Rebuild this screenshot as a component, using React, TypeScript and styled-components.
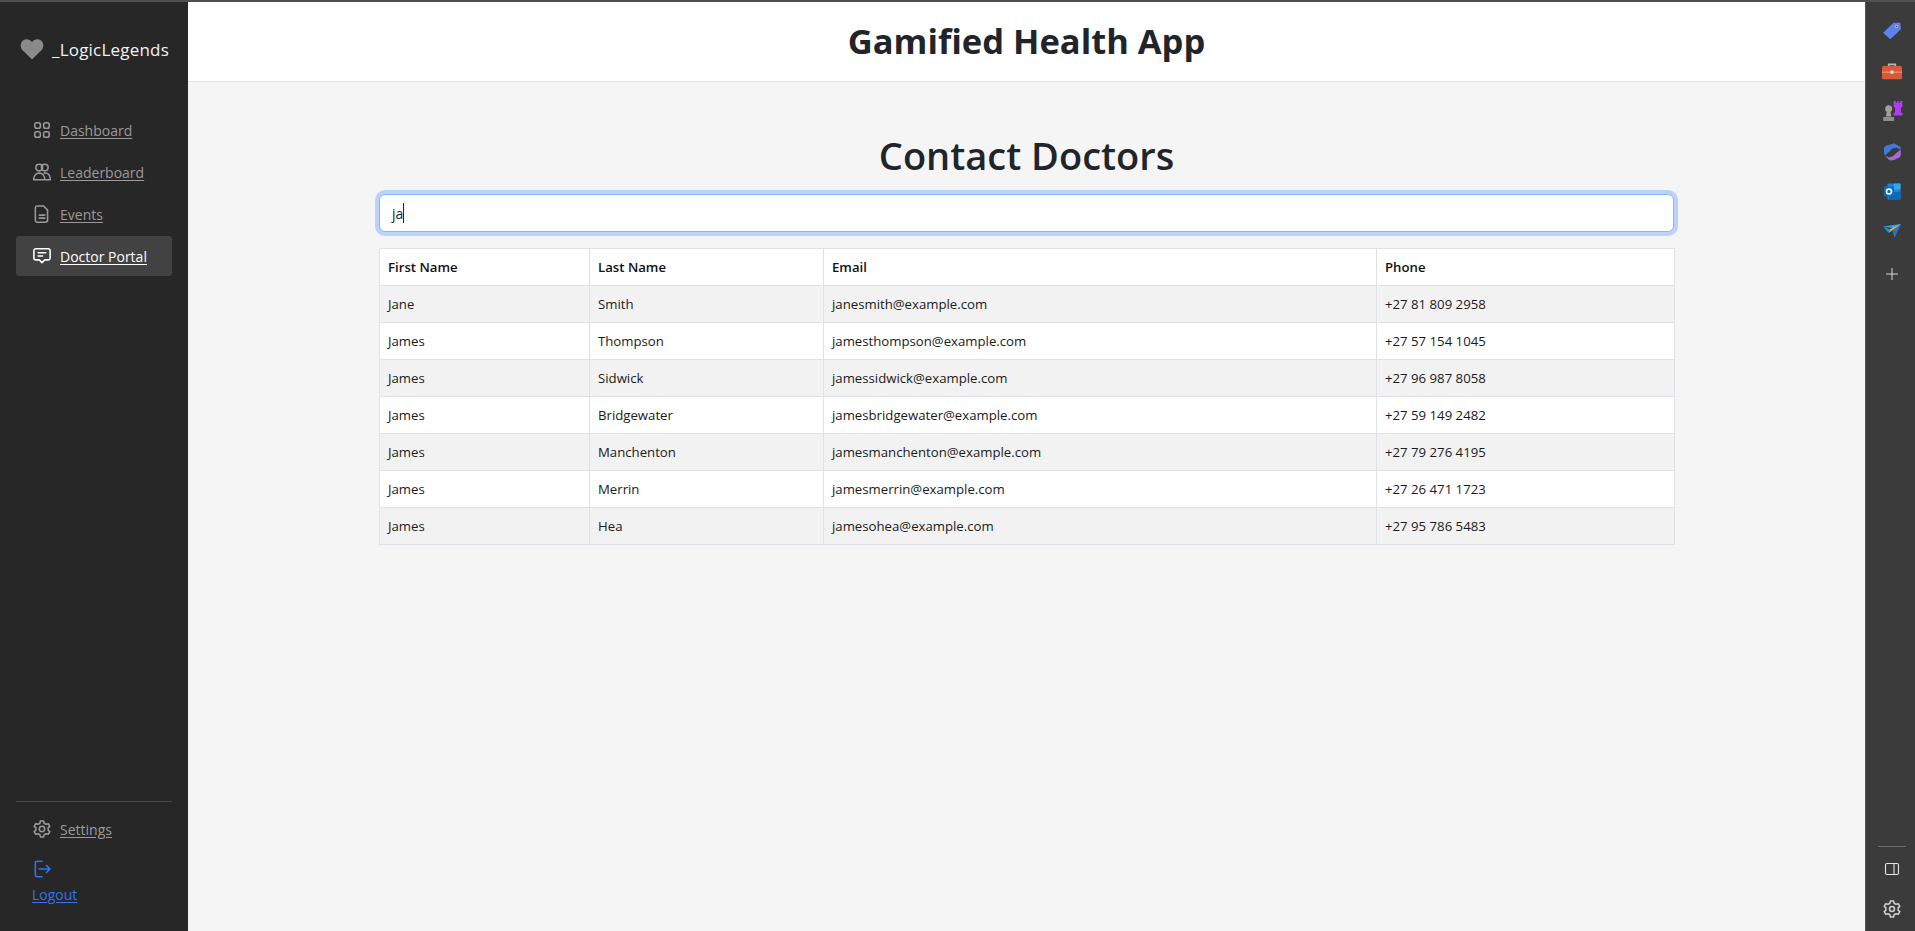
import React from 'react';
import styled, { createGlobalStyle } from 'styled-components';

const Global = createGlobalStyle`
  html, body { margin: 0; padding: 0; height: 100%; background: #f5f5f5; }
  body { font-family: "Open Sans", "Noto Sans", "Liberation Sans", sans-serif; overflow: hidden; }
  * { box-sizing: border-box; }
`;

const Page = styled.div`
  width: 1915px;
  height: 931px;
  display: flex;
  flex-direction: column;
`;

const TopEdge = styled.div`
  height: 2px;
  flex: none;
  background: #4f4f4f;
`;

const Body = styled.div`
  flex: 1;
  display: flex;
  min-height: 0;
`;

const Sidebar = styled.aside`
  width: 188px;
  flex: none;
  background: #272727;
  display: flex;
  flex-direction: column;
  padding: 0 16px;
`;

const Brand = styled.div`
  height: 46px;
  margin-top: 24px;
  display: flex;
  align-items: center;
  gap: 8px;
  padding-left: 4px;
  color: #f2f2f2;
  font-size: 17px;
  letter-spacing: 0.2px;
`;

const Nav = styled.nav`
  margin-top: 38px;
  display: flex;
  flex-direction: column;
  gap: 2px;
`;

const NavItem = styled.a<{ $active?: boolean }>`
  height: 40px;
  display: flex;
  align-items: center;
  gap: 8px;
  padding-left: 16px;
  border-radius: 3px;
  font-size: 14px;
  text-decoration: underline;
  text-underline-offset: 2px;
  color: ${(p) => (p.$active ? '#ffffff' : '#9a9a9a')};
  background: ${(p) => (p.$active ? '#424242' : 'transparent')};
`;

const SideFooter = styled.div`
  margin-top: auto;
  border-top: 1px solid #454545;
  padding-top: 7px;
  padding-bottom: 27px;
`;

const Logout = styled.a`
  display: flex;
  flex-direction: column;
  align-items: flex-start;
  gap: 6px;
  margin-top: 10px;
  padding-left: 16px;
  color: #2f74f0;
  font-size: 14px;
  text-decoration: underline;
  text-underline-offset: 2px;
`;

const Main = styled.main`
  flex: 1;
  min-width: 0;
  display: flex;
  flex-direction: column;
`;

const Header = styled.header`
  height: 80px;
  flex: none;
  background: #fff;
  border-bottom: 1px solid #e4e4e4;
  display: flex;
  align-items: center;
  justify-content: center;
  padding-bottom: 3px;
`;

const AppTitle = styled.h1`
  margin: 0;
  font-size: 34.5px;
  font-weight: 700;
  color: #212529;
`;

const Content = styled.div`
  padding: 44px 191px 0;
`;

const PageTitle = styled.h2`
  margin: 0 0 10px;
  text-align: center;
  font-size: 38px;
  line-height: 58px;
  font-weight: 600;
  color: #212529;
`;

const SearchBox = styled.div`
  height: 38px;
  margin: 0 0 16px 0;
  background: #fff;
  border: 1px solid #86b7fe;
  border-radius: 6px;
  box-shadow: 0 0 0 4px rgba(13, 110, 253, 0.25);
  display: flex;
  align-items: center;
  padding-left: 12px;
  font-size: 14px;
  color: #212529;
`;

const Caret = styled.span`
  width: 1px;
  height: 20px;
  background: #212529;
`;

const Table = styled.table`
  width: 1295px;
  border-collapse: collapse;
  table-layout: fixed;
  font-size: 13.2px;
  color: #1a1a1a;
`;

const Cell = styled.td`
  height: 37px;
  padding: 0 8px;
  border: 1px solid #dee2e6;
`;

const HeadCell = styled(Cell).attrs({ as: 'th' })`
  text-align: left;
  font-weight: 600;
  color: #111;
`;

const Row = styled.tr<{ $odd: boolean }>`
  background: ${(p) => (p.$odd ? '#f2f2f2' : '#fff')};
`;

const Rail = styled.aside`
  width: 50px;
  flex: none;
  background: #3b3b3b;
  border-left: 1px solid #555;
  display: flex;
  flex-direction: column;
  align-items: center;
  padding: 9px 0 2px 3px;
`;

const RailSlot = styled.div<{ $down?: number }>`
  width: 100%;
  height: 40px;
  flex: none;
  display: flex;
  align-items: center;
  justify-content: center;
  margin-top: ${(p) => p.$down ?? 0}px;
`;

const RailFooter = styled.div`
  margin-top: auto;
  width: 100%;
  display: flex;
  flex-direction: column;
  align-items: center;
`;

const RailRule = styled.div`
  width: 28px;
  height: 1px;
  background: #6a6a6a;
  margin-bottom: 2px;
`;

const I = ({ children, size = 20, color = 'currentColor' }: { children: React.ReactNode; size?: number; color?: string }) => (
  <svg width={size} height={size} viewBox="0 0 18 18" fill="none" stroke={color} strokeWidth="1.4" strokeLinecap="round" strokeLinejoin="round" style={{ flex: 'none' }}>
    {children}
  </svg>
);

const doctors = [
  ['Jane', 'Smith', 'janesmith@example.com', '+27 81 809 2958'],
  ['James', 'Thompson', 'jamesthompson@example.com', '+27 57 154 1045'],
  ['James', 'Sidwick', 'jamessidwick@example.com', '+27 96 987 8058'],
  ['James', 'Bridgewater', 'jamesbridgewater@example.com', '+27 59 149 2482'],
  ['James', 'Manchenton', 'jamesmanchenton@example.com', '+27 79 276 4195'],
  ['James', 'Merrin', 'jamesmerrin@example.com', '+27 26 471 1723'],
  ['James', 'Hea', 'jamesohea@example.com', '+27 95 786 5483'],
];

function App() {
  return (
    <Page>
      <Global />
      <TopEdge />
      <Body>
        <Sidebar>
          <Brand>
            <svg width="24" height="22" viewBox="0 0 24 22"><path d="M12 21.5 2.6 12.2C-.2 9.300.2 4.700 3 2.600 5.800.5 9.700 1 12 4.200 14.300 1 18.200.5 21 2.600c2.800 2.100 3.200 6.700.4 9.600z" fill="#8a8a8a" /></svg>
            <span>_LogicLegends</span>
          </Brand>
          <Nav>
            <NavItem $active={false}>
              <I><rect x="2.500" y="2.500" width="5" height="5" rx="1.600" /><rect x="10.500" y="2.500" width="5" height="5" rx="1.600" /><rect x="2.500" y="10.500" width="5" height="5" rx="1.600" /><rect x="10.500" y="10.500" width="5" height="5" rx="1.600" /></I>
              Dashboard
            </NavItem>
            <NavItem $active={false}>
              <I><circle cx="6.500" cy="5" r="3" /><circle cx="11.500" cy="5" r="3" /><path d="M1.500 16c0-3.500 2-6 5-6s5 2.500 5 6zM11 10c3.500-.5 5.500 2 5.500 6h-5" /></I>
              Leaderboard
            </NavItem>
            <NavItem $active={false}>
              <I><path d="M4.500 1.800h6l3.500 3.700v9a2 2 0 0 1-2 2H5a2 2 0 0 1-2-2V3.500a1.700 1.700 0 0 1 1.500-1.700zM6.500 10h5M6.500 12.700h5" /></I>
              Events
            </NavItem>
            <NavItem $active>
              <I color="#fff"><path d="M3.500 2.500h11a1.800 1.800 0 0 1 1.800 1.800v6.400a1.800 1.800 0 0 1-1.800 1.800h-3L9 15l-2.500-2.500h-3a1.800 1.800 0 0 1-1.800-1.800V4.300a1.800 1.800 0 0 1 1.800-1.800zM5.500 6h7M5.500 9h4" /></I>
              Doctor Portal
            </NavItem>
          </Nav>
          <SideFooter>
            <NavItem $active={false}>
              <I><circle cx="9" cy="9" r="2.400" /><path d="M7.600 1.800h2.800l.5 2 1.700 1 2-.6 1.400 2.400-1.500 1.400v2l1.500 1.400-1.400 2.400-2-.6-1.700 1-.5 2H7.600l-.5-2-1.700-1-2 .6L2 11.400l1.500-1.400V8L2 6.600 3.400 4.200l2 .6 1.700-1z" /></I>
              Settings
            </NavItem>
            <Logout>
              <I color="#2f74f0"><path d="M9 2H4.500A1.500 1.500 0 0 0 3 3.500v11A1.500 1.500 0 0 0 4.500 16H9M6.500 9H16M13 5.800 16.200 9 13 12.200" /></I>
              Logout
            </Logout>
          </SideFooter>
        </Sidebar>
        <Main>
          <Header><AppTitle>Gamified Health App</AppTitle></Header>
          <Content>
            <PageTitle>Contact Doctors</PageTitle>
            <SearchBox>ja<Caret /></SearchBox>
            <Table>
              <colgroup>
                <col style={{ width: 210 }} />
                <col style={{ width: 234 }} />
                <col style={{ width: 553 }} />
                <col style={{ width: 298 }} />
              </colgroup>
              <thead>
                <tr style={{ background: '#fff' }}>
                  {['First Name', 'Last Name', 'Email', 'Phone'].map((h) => <HeadCell key={h}>{h}</HeadCell>)}
                </tr>
              </thead>
              <tbody>
                {doctors.map((d, i) => (
                  <Row key={d[2]} $odd={i % 2 === 0}>
                    {d.map((c) => <Cell key={c}>{c}</Cell>)}
                  </Row>
                ))}
              </tbody>
            </Table>
          </Content>
        </Main>
        <Rail>
          <RailSlot>
            <svg width="20" height="20" viewBox="0 0 18 18"><path d="M1 10.500 10.500 1.500 16.500 1.500 17 7.500 7.500 16.500z" fill="#5b82f0" /><circle cx="13" cy="5" r="1.600" fill="#e9b13b" /><circle cx="13" cy="5" r=".7" fill="#444" /></svg>
          </RailSlot>
          <RailSlot>
            <svg width="20" height="18" viewBox="0 0 18 16"><path d="M6 4V2h6v2" fill="none" stroke="#b8b8b8" strokeWidth="1.500" /><rect y="3.500" width="18" height="12" rx="1" fill="#d65a38" /><rect y="8.500" width="18" height="1.200" fill="#f08a68" /><rect x="7.500" y="7.500" width="3" height="3" rx="1" fill="#ddd" /></svg>
          </RailSlot>
          <RailSlot>
            <svg width="21" height="22" viewBox="0 0 19 20"><circle cx="6" cy="8" r="3.200" fill="#a0a0a0" /><path d="M4.500 10h3l1 5h-5z" fill="#a0a0a0" /><rect x="1" y="15.500" width="10" height="3.500" rx=".7" fill="#8e8e8e" /><path d="M10.500 1h2v1.500h1.300V1h1.400v1.500h1.300V1h2v5l-1.300 1v4.500h1.300v2.500h-8v-2.500h1.300V7l-1.300-1z" fill="#b13cf0" /></svg>
          </RailSlot>
          <RailSlot>
            <svg width="17" height="19" viewBox="0 0 17 18"><path d="M5 2.500 10 .7l5.800 3.300c.8.500 1 1 1 2v1L12 5 8 6.500 5 9.500 1 13c-.6-1-1-2-1-4V6c0-1.500 1-2.800 5-3.500z" fill="#3f78e0" /><path d="M16.800 7v5c0 1.500-.8 2.500-2 3.200L10 17.500c-2 .8-4 .5-5.500-.5L1 13l4 2 4-1.300 3-3z" fill="#a768d8" /><path d="M7 7l3-1.500L12.500 7v3L10 12 7 10.500z" fill="#3b3b3b" /></svg>
          </RailSlot>
          <RailSlot>
            <svg width="17" height="19" viewBox="0 0 17 18"><rect x="3.500" y="1" width="13" height="16" rx="1" fill="#1b86d8" /><rect x="10" y="1" width="6.500" height="6" fill="#32a6ea" /><path d="M5 10l11.500-1v8H5z" fill="#0f67b8" /><rect y="4" width="10" height="10" rx="1" fill="#0f6cbd" /><circle cx="5" cy="9" r="2.500" fill="none" stroke="#fff" strokeWidth="1.500" /></svg>
          </RailSlot>
          <RailSlot>
            <svg width="18" height="14" viewBox="0 0 18 14"><path d="M0 2.500 18 0l-5 4.500z" fill="#2ba6ef" /><path d="M18 0 7 5.200 5.500 9z" fill="#f3b544" /><path d="M18 0 9.500 6.500 11.500 14z" fill="#2c73c8" /><path d="M0 2.500 7 5.200 5.500 9z" fill="#1c8dd9" /></svg>
          </RailSlot>
          <RailSlot $down={3}>
            <svg width="14" height="14" viewBox="0 0 14 14" stroke="#d8d8d8" strokeWidth="1"><path d="M7 1v12M1 7h12" /></svg>
          </RailSlot>
          <RailFooter>
            <RailRule />
            <RailSlot>
              <svg width="16" height="14" viewBox="0 0 16 14" fill="none" stroke="#e4e4e4" strokeWidth="1.100"><rect x="1.500" y="1.500" width="13" height="11" rx="1.500" /><path d="M10 1.500v11" /></svg>
            </RailSlot>
            <RailSlot>
              <I color="#cfcfcf"><circle cx="9" cy="9" r="2.200" /><path d="M7.600 1.800h2.800l.5 2 1.700 1 2-.6 1.400 2.400-1.500 1.400v2l1.500 1.400-1.400 2.400-2-.6-1.700 1-.5 2H7.600l-.5-2-1.700-1-2 .6L2 11.400l1.500-1.400V8L2 6.600 3.400 4.200l2 .6 1.700-1z" /></I>
            </RailSlot>
          </RailFooter>
        </Rail>
      </Body>
    </Page>
  );
}

export default App;
